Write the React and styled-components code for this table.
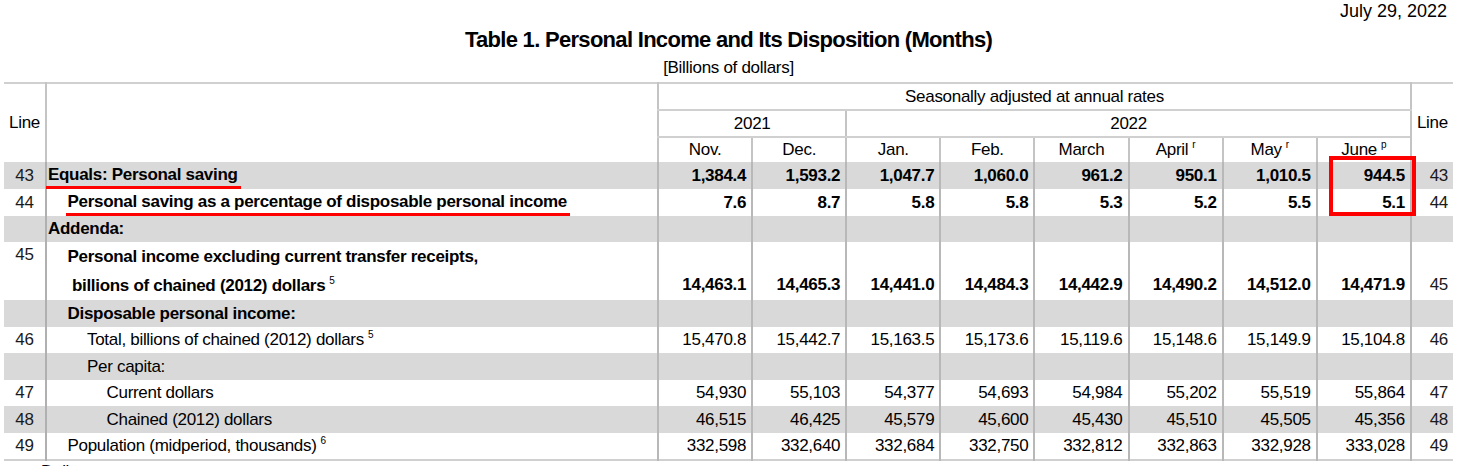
import React from 'react';
import styled, { createGlobalStyle } from 'styled-components';

const GlobalStyle = createGlobalStyle`
  html, body {
    margin: 0;
    padding: 0;
    background: #ffffff;
    overflow: hidden;
  }
  body {
    font-family: "Liberation Sans", Arial, sans-serif;
    color: #000;
  }
`;

const Page = styled.div`
  width: 1464px;
  height: 466px;
  padding: 0 11px 0 4px;
  box-sizing: border-box;
  letter-spacing: -0.3px;
`;

const DateLine = styled.div`
  height: 23px;
  text-align: right;
  font-size: 18px;
  line-height: 22px;
  letter-spacing: 0;
  padding-right: 6px;
`;

const Title = styled.h1`
  margin: 0;
  height: 33px;
  text-align: center;
  font-size: 22px;
  line-height: 34px;
  letter-spacing: -0.7px;
  font-weight: bold;
`;

const Subtitle = styled.div`
  height: 26px;
  text-align: center;
  font-size: 17px;
  line-height: 24px;
`;

const Table = styled.table`
  width: 1449px;
  table-layout: fixed;
  border-collapse: collapse;
  font-size: 17px;
  border-top: 2px solid #d0d0d0;
  border-bottom: 2px solid #d0d0d0;
`;

const HeadCell = styled.td`
  height: ${p => p.h || 25}px;
  padding: 0;
  text-align: center;
  vertical-align: middle;
  line-height: 20px;
  border-left: ${p => (p.bl ? '2px solid #c4c4c4' : 'none')};
  border-bottom: ${p => (p.bb ? '2px solid #d0d0d0' : 'none')};
`;

const Row = styled.tr`
  height: ${p => p.h || 26}px;
  background: ${p => (p.shade ? '#d9d9d9' : '#ffffff')};
  font-weight: ${p => (p.bold ? 'bold' : 'normal')};
`;

const LineNo = styled.td`
  padding: 0 5px ${p => (p.va === 'bottom' ? 2 : 0)}px;
  font-weight: normal;
  color: #1a1a1a;
  text-align: ${p => (p.right ? 'right' : 'center')};
  vertical-align: ${p => p.va || 'middle'};
  line-height: 26px;
  border-left: ${p => (p.right ? '2px solid #b8b8b8' : 'none')};
`;

const Label = styled.td`
  padding: 0 0 0 ${p => 1 + p.indent * 19.5}px;
  border-left: 2px solid #b0b0b0;
  white-space: nowrap;
  line-height: ${p => (p.multi ? '29px' : '26px')};
  vertical-align: ${p => (p.multi ? 'top' : 'middle')};
`;

const Num = styled.td`
  padding: 0 5px ${p => (p.va === 'bottom' ? 2 : 0)}px 0;
  text-align: right;
  border-left: 2px solid #b8b8b8;
  vertical-align: ${p => p.va || 'middle'};
  line-height: 26px;
  white-space: nowrap;
  position: relative;
`;

const Sup = styled.sup`
  font-size: 10px;
  font-weight: normal;
  vertical-align: 7px;
  line-height: 0;
  margin-left: 4px;
`;

const Marked = styled.span`
  display: inline-block;
  line-height: 22px;
  margin-left: -2px;
  padding: 0 3px 0 2px;
  border-bottom: 3px solid #ff0000;
`;

const RedBox = styled.div`
  position: absolute;
  left: 11px;
  top: -6px;
  width: 87px;
  height: 60px;
  box-sizing: border-box;
  border: 4px solid #ff0000;
  pointer-events: none;
`;

const Footer = styled.div`
  padding: 1px 0 0 37px;
  font-size: 17px;
`;

const months = [
  ['Nov.'], ['Dec.'], ['Jan.'], ['Feb.'], ['March'], ['April', 'r'], ['May', 'r'], ['June', 'p'],
];

const rows = [
  { no: '43', label: 'Equals: Personal saving', indent: 0, shade: true, bold: true, mark: true, box: true, h: 27,
    values: ['1,384.4', '1,593.2', '1,047.7', '1,060.0', '961.2', '950.1', '1,010.5', '944.5'] },
  { no: '44', label: 'Personal saving as a percentage of disposable personal income', indent: 1, bold: true, mark: true,
    values: ['7.6', '8.7', '5.8', '5.8', '5.3', '5.2', '5.5', '5.1'] },
  { no: '', label: 'Addenda:', indent: 0, shade: true, bold: true, values: Array(8).fill('') },
  { no: '45', label: 'Personal income excluding current transfer receipts,', second: '\u00a0billions of chained (2012) dollars', sup: '5',
    indent: 1, bold: true, h: 58, multi: true,
    values: ['14,463.1', '14,465.3', '14,441.0', '14,484.3', '14,442.9', '14,490.2', '14,512.0', '14,471.9'] },
  { no: '', label: 'Disposable personal income:', indent: 1, shade: true, bold: true, h: 27, values: Array(8).fill('') },
  { no: '46', label: 'Total, billions of chained (2012) dollars', sup: '5', indent: 2,
    values: ['15,470.8', '15,442.7', '15,163.5', '15,173.6', '15,119.6', '15,148.6', '15,149.9', '15,104.8'] },
  { no: '', label: 'Per capita:', indent: 2, shade: true, h: 27, values: Array(8).fill('') },
  { no: '47', label: 'Current dollars', indent: 3,
    values: ['54,930', '55,103', '54,377', '54,693', '54,984', '55,202', '55,519', '55,864'] },
  { no: '48', label: 'Chained (2012) dollars', indent: 3, shade: true, h: 27,
    values: ['46,515', '46,425', '45,579', '45,600', '45,430', '45,510', '45,505', '45,356'] },
  { no: '49', label: 'Population (midperiod, thousands)', sup: '6', indent: 1,
    values: ['332,598', '332,640', '332,684', '332,750', '332,812', '332,863', '332,928', '333,028'] },
];

function App() {
  const renderLabel = row => {
    if (row.multi) {
      return (
        <>
          {row.label}
          <br />
          {row.second}
          {row.sup && <Sup>{row.sup}</Sup>}
        </>
      );
    }
    const text = row.mark ? <Marked>{row.label}</Marked> : row.label;
    return (
      <>
        {text}
        {row.sup && <Sup>{row.sup}</Sup>}
      </>
    );
  };

  return (
    <Page>
      <GlobalStyle />
      <DateLine>July 29, 2022</DateLine>
      <Title>Table 1. Personal Income and Its Disposition (Months)</Title>
      <Subtitle>[Billions of dollars]</Subtitle>
      <Table>
        <colgroup>
          <col style={{ width: 42 }} />
          <col style={{ width: 612 }} />
          {months.map((m, i) => <col key={i} style={{ width: 94.1 }} />)}
          <col style={{ width: 42 }} />
        </colgroup>
        <tbody>
          <tr>
            <HeadCell rowSpan={3}>Line</HeadCell>
            <HeadCell rowSpan={3} bl />
            <HeadCell colSpan={8} bl bb h={25}>Seasonally adjusted at annual rates</HeadCell>
            <HeadCell rowSpan={3} bl>Line</HeadCell>
          </tr>
          <tr>
            <HeadCell colSpan={2} bl bb h={25}>2021</HeadCell>
            <HeadCell colSpan={6} bl bb h={25}>2022</HeadCell>
          </tr>
          <tr>
            {months.map(([m, s], i) => (
              <HeadCell key={m} bl h={24}>
                {m}
                {s && <Sup>{s}</Sup>}
              </HeadCell>
            ))}
          </tr>
          {rows.map((row, r) => (
            <Row key={r} shade={row.shade} bold={row.bold} h={row.h}>
              <LineNo va={row.multi ? 'top' : 'middle'}>{row.no}</LineNo>
              <Label indent={row.indent} multi={row.multi}>{renderLabel(row)}</Label>
              {row.values.map((v, i) => (
                <Num key={i} va={row.multi ? 'bottom' : 'middle'}>
                  {v}
                  {row.box && i === 7 && <RedBox />}
                </Num>
              ))}
              <LineNo right va={row.multi ? 'bottom' : 'middle'}>{row.no}</LineNo>
            </Row>
          ))}
        </tbody>
      </Table>
      <Footer>Dollars</Footer>
    </Page>
  );
}

export default App;
